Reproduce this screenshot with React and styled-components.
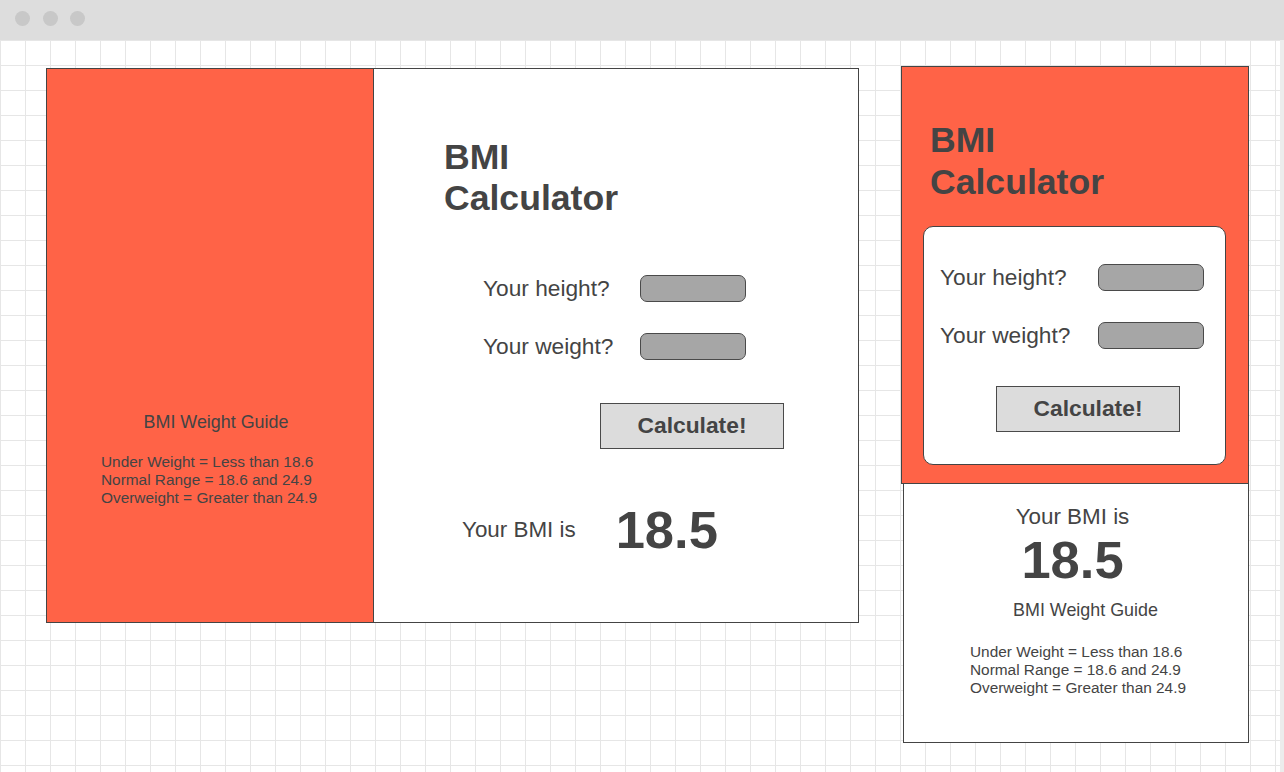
import React from "react";
import styled, { createGlobalStyle } from "styled-components";

const Global = createGlobalStyle`
  html, body { margin: 0; padding: 0; background: #ffffff; }
  body { font-family: "Liberation Sans", Arial, sans-serif; color: #444444; }
  * { box-sizing: border-box; }
`;

const TOMATO = "#ff6347";
const INK = "#444444";

const Window = styled.div`
  width: 1284px;
  height: 772px;
  display: flex;
  flex-direction: column;
  overflow: hidden;
`;

const TitleBar = styled.div`
  height: 40px;
  flex: none;
  background: #dddddd;
  display: flex;
  align-items: center;
  gap: 12.5px;
  padding: 0 0 3px 15px;
`;

const Dot = styled.span`
  width: 15px;
  height: 15px;
  border-radius: 50%;
  background: #c8c8c8;
`;

const Canvas = styled.main`
  flex: 1;
  display: flex;
  align-items: flex-start;
  gap: 42px;
  padding: 28px 0 0 46px;
  border-right: 4px solid #ececec;
  background-color: #ffffff;
  background-image:
    linear-gradient(to right, #e6e6e6 1px, transparent 1px),
    linear-gradient(to bottom, #e6e6e6 1px, transparent 1px);
  background-size: 25px 25px;
  background-position: 0 0;
`;

const DesktopCard = styled.section`
  width: 813px;
  height: 555px;
  border: 1px solid ${INK};
  background: #ffffff;
  display: flex;
`;

const SidePanel = styled.aside`
  width: 327px;
  flex: none;
  background: ${TOMATO};
  border-right: 1px solid ${INK};
  padding: 343px 0 0 54px;
`;

const GuideBlock = styled.div`
  width: ${(p) => p.$width}px;
  margin: ${(p) => p.$top || 0}px 0 0 ${(p) => p.$offset || 0}px;
`;

const GuideTitle = styled.div`
  font-size: 17.9px;
  line-height: 20px;
  text-align: center;
  white-space: nowrap;
  padding-left: ${(p) => p.$shift || 0}px;
`;

const GuideList = styled.div`
  margin-top: ${(p) => p.$gap}px;
  font-size: 15.4px;
  line-height: 18px;
  white-space: nowrap;
`;

const MainPanel = styled.div`
  flex: 1;
  padding: 68px 0 0 70px;
`;

const Title = styled.h1`
  margin: 0;
  font-size: 35.6px;
  line-height: ${(p) => p.$lh}px;
  font-weight: 700;
  color: ${INK};
`;

const Form = styled.div`
  display: flex;
  flex-direction: column;
  gap: ${(p) => p.$gap}px;
  margin: ${(p) => p.$top}px 0 0 ${(p) => p.$left}px;
`;

const FieldRow = styled.label`
  display: flex;
  align-items: center;
  height: 27px;
`;

const FieldLabel = styled.span`
  width: ${(p) => p.$w}px;
  flex: none;
  font-size: 22.7px;
  line-height: 27px;
  white-space: nowrap;
`;

const Field = styled.div`
  width: 106px;
  height: 27px;
  border-radius: 7px;
  background: #a6a6a6;
  border: 1px solid #4a4a4a;
`;

const CalcButton = styled.button`
  display: block;
  width: 184px;
  height: 46px;
  margin: ${(p) => p.$top}px 0 0 ${(p) => p.$left}px;
  padding: 0;
  background: #dcdcdc;
  border: 1px solid #4a4a4a;
  border-radius: 0;
  font-family: "Liberation Sans", Arial, sans-serif;
  font-weight: 700;
  font-size: 22.8px;
  color: ${INK};
`;

const ResultRow = styled.div`
  display: flex;
  align-items: center;
  gap: 40px;
  margin: 51px 0 0 18px;
  height: 60px;
`;

const ResultLabel = styled.span`
  font-size: 22.4px;
  line-height: 26px;
  white-space: nowrap;
`;

const ResultValue = styled.span`
  font-size: 52.5px;
  line-height: ${(p) => p.$lh || 60}px;
  font-weight: 700;
  color: ${INK};
`;

const MobileColumn = styled.div`
  width: 348px;
  margin-top: -2px;
  display: flex;
  flex-direction: column;
`;

const MobileHeader = styled.section`
  height: 418px;
  background: ${TOMATO};
  border: 1px solid ${INK};
  padding: 52px 0 0 28px;
`;

const InnerCard = styled.div`
  width: 303px;
  height: 239px;
  margin: 23px 0 0 -7px;
  background: #ffffff;
  border: 1px solid ${INK};
  border-radius: 10px;
  padding: 37px 0 0 16px;
`;

const MobileResult = styled.section`
  height: 259px;
  margin-left: 2px;
  border: 1px solid ${INK};
  border-top: none;
  background: #ffffff;
  display: flex;
  flex-direction: column;
  padding-top: 20px;
`;

const CenterLine = styled.div`
  text-align: center;
  padding-right: 7px;
  margin-top: ${(p) => p.$top || 0}px;
`;

const guide = [
  "Under Weight = Less than 18.6",
  "Normal Range = 18.6 and 24.9",
  "Overweight = Greater than 24.9",
];

function Guide({ width, offset, shift, gap, top }) {
  return (
    <GuideBlock $width={width} $offset={offset} $top={top}>
      <GuideTitle $shift={shift}>BMI Weight Guide</GuideTitle>
      <GuideList $gap={gap}>
        {guide.map((g) => (
          <div key={g}>{g}</div>
        ))}
      </GuideList>
    </GuideBlock>
  );
}

function Fields({ labelWidth, top, left }) {
  return (
    <Form $gap={30.5} $top={top} $left={left}>
      <FieldRow>
        <FieldLabel $w={labelWidth}>Your height?</FieldLabel>
        <Field />
      </FieldRow>
      <FieldRow>
        <FieldLabel $w={labelWidth}>Your weight?</FieldLabel>
        <Field />
      </FieldRow>
    </Form>
  );
}

export default function App() {
  return (
    <>
      <Global />
      <Window>
        <TitleBar>
          <Dot />
          <Dot />
          <Dot />
        </TitleBar>
        <Canvas>
          <DesktopCard>
            <SidePanel>
              <Guide width={220} shift={10} gap={21} />
            </SidePanel>
            <MainPanel>
              <Title $lh={41}>
                BMI
                <br />
                Calculator
              </Title>
              <Fields labelWidth={157} top={56} left={39} />
              <CalcButton $top={43} $left={156}>
                Calculate!
              </CalcButton>
              <ResultRow>
                <ResultLabel>Your BMI is</ResultLabel>
                <ResultValue>18.5</ResultValue>
              </ResultRow>
            </MainPanel>
          </DesktopCard>
          <MobileColumn>
            <MobileHeader>
              <Title $lh={42}>
                BMI
                <br />
                Calculator
              </Title>
              <InnerCard>
                <Fields labelWidth={158} top={0} left={0} />
                <CalcButton $top={37} $left={56}>
                  Calculate!
                </CalcButton>
              </InnerCard>
            </MobileHeader>
            <MobileResult>
              <CenterLine>
                <ResultLabel>Your BMI is</ResultLabel>
              </CenterLine>
              <CenterLine $top={2}>
                <ResultValue $lh={56}>18.5</ResultValue>
              </CenterLine>
              <Guide width={220} offset={66} shift={11} gap={23} top={12} />
            </MobileResult>
          </MobileColumn>
        </Canvas>
      </Window>
    </>
  );
}
